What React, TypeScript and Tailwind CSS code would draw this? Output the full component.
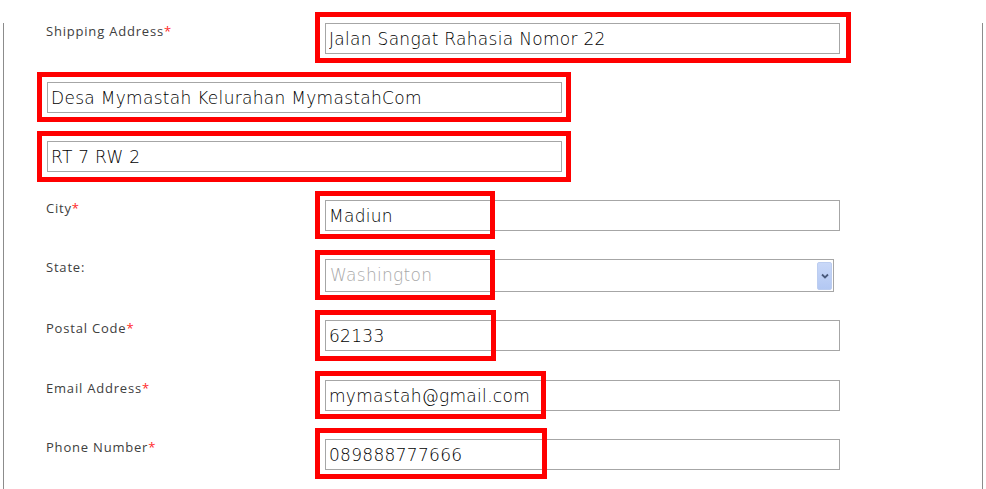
import React from "react";

const FONT = { fontFamily: '"DejaVu Sans", "Open Sans", sans-serif' };

function Label({ text, required }: { text: string; required?: boolean }) {
  return (
    <div className="w-[321px] shrink-0 pl-[42px] font-['Open_Sans',sans-serif] text-[13px] leading-[16px] tracking-[0.8px] text-[#404040]">
      {text}
      {required && <span className="text-[#ff2a2a]">*</span>}
    </div>
  );
}

function TextBox({ value }: { value: string }) {
  return (
    <input
      readOnly
      defaultValue={value}
      className="h-[31px] w-[515px] border border-[#a6a6a6] bg-white px-[3px] text-[17px] font-extralight tracking-[0.3px] text-black outline-none"
    />
  );
}

function StateSelect() {
  return (
    <div className="flex h-[33px] w-[509px] items-center justify-between border border-[#a6a6a6] bg-white pl-[4px] pr-[1px]">
      <span className="text-[17px] font-extralight tracking-[0.3px] text-[#a8a8a8]">Washington</span>
      <span className="flex h-[28px] w-[15px] items-center justify-center rounded-[2px] border border-[#bccdf0] bg-gradient-to-b from-[#c9d8f8] to-[#b3c8f3]">
        <svg width="8" height="6" viewBox="0 0 8 6">
          <path d="M1 1.5 L4 4.5 L7 1.5" fill="none" stroke="#4a5a7c" strokeWidth="1.8" />
        </svg>
      </span>
    </div>
  );
}

// red annotation boxes drawn over the form
const marks = [
  "left-[315px] top-[12px] w-[536px] h-[51px]",
  "left-[37px] top-[72px] w-[534px] h-[50px]",
  "left-[37px] top-[131px] w-[534px] h-[51px]",
  "left-[315px] top-[191px] w-[180px] h-[48px]",
  "left-[315px] top-[250px] w-[180px] h-[50px]",
  "left-[315px] top-[310px] w-[181px] h-[51px]",
  "left-[315px] top-[371px] w-[231px] h-[48px]",
  "left-[315px] top-[428px] w-[232px] h-[51px]",
];

export default function App() {
  return (
    <div className="relative h-[489px] w-[986px] overflow-hidden bg-white" style={FONT}>
      <div className="ml-[3px] h-full w-[980px] border-x border-[#8c8c8c]">
        <div className="mt-[23px] flex">
          <Label text="Shipping Address" required />
          <TextBox value="Jalan Sangat Rahasia Nomor 22" />
        </div>
        <div className="mt-[28px] pl-[43px]">
          <TextBox value="Desa Mymastah Kelurahan MymastahCom" />
        </div>
        <div className="mt-[28px] pl-[43px]">
          <TextBox value="RT 7 RW 2" />
        </div>
        <div className="mt-[28px] flex">
          <Label text="City" required />
          <TextBox value="Madiun" />
        </div>
        <div className="mt-[28px] flex">
          <Label text="State:" />
          <StateSelect />
        </div>
        <div className="mt-[28px] flex">
          <Label text="Postal Code" required />
          <TextBox value="62133" />
        </div>
        <div className="mt-[29px] flex">
          <Label text="Email Address" required />
          <TextBox value="mymastah@gmail.com" />
        </div>
        <div className="mt-[28px] flex">
          <Label text="Phone Number" required />
          <TextBox value="089888777666" />
        </div>
      </div>
      {marks.map((m, i) => (
        <div key={i} className={`pointer-events-none absolute border-[5px] border-[#ff0000] ${m}`} />
      ))}
    </div>
  );
}
